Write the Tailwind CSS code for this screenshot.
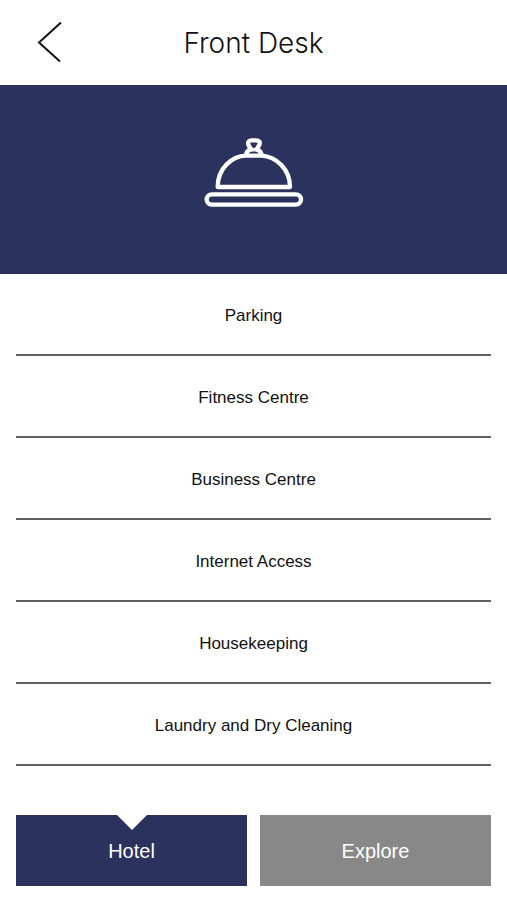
<!DOCTYPE html>
<html lang="en">
<head>
<meta charset="utf-8">
<meta name="viewport" content="width=device-width, initial-scale=1">
<title>Front Desk</title>
<script src="https://cdn.jsdelivr.net/npm/@tailwindcss/browser@4"></script>
</head>
<body class="flex min-h-screen flex-col bg-white font-['Liberation_Sans',Arial,sans-serif] text-[#111]">
  <header class="grid h-[85px] grid-cols-[1fr_auto_1fr] items-center px-8">
    <button type="button" aria-label="Back" class="justify-self-start px-1">
      <svg class="h-11 w-7" viewBox="0 0 28 44" fill="none" stroke="#111" stroke-width="2" aria-hidden="true"><path d="M25 1.500 3 21.500 24 40.500"/></svg>
    </button>
    <h1 class="font-[Inter,'Liberation_Sans',sans-serif] text-[28px] leading-8 font-light">Front Desk</h1>
  </header>

  <div class="flex h-[189px] justify-center bg-[#2b325d] pt-[52px]">
    <svg class="h-[71px] w-[100px]" viewBox="41 37 300 213" fill="none" stroke="#fff" stroke-width="13" stroke-linejoin="round" aria-hidden="true">
      <rect x="49" y="209" width="283" height="31" rx="15.500"/>
      <path d="M82 187C82 132 124 94 167 93H214C258 96 299 134 299 187Z"/>
      <path d="M167 91C168 80 175 76 182 74L175 62C170 50 177 47 184 47H197C206 47 212 52 206 62L199 74C206 76 212 80 214 91" stroke-width="13"/>
      <path d="M180 75H201" stroke-width="11"/>
    </svg>
  </div>

  <main class="px-4">
    <ul class="text-center text-[17px] leading-5">
      <li class="border-b-2 border-[#606060]"><a href="#parking" class="block pt-8 pb-7">Parking</a></li>
      <li class="border-b-2 border-[#606060]"><a href="#fitness" class="block pt-8 pb-7">Fitness Centre</a></li>
      <li class="border-b-2 border-[#606060]"><a href="#business" class="block pt-8 pb-7">Business Centre</a></li>
      <li class="border-b-2 border-[#606060]"><a href="#internet" class="block pt-8 pb-7">Internet Access</a></li>
      <li class="border-b-2 border-[#606060]"><a href="#housekeeping" class="block pt-8 pb-7">Housekeeping</a></li>
      <li class="border-b-2 border-[#606060]"><a href="#laundry" class="block pt-8 pb-7">Laundry and Dry Cleaning</a></li>
    </ul>
  </main>

  <nav class="mt-auto grid grid-cols-2 gap-[13px] px-4 pt-6 pb-[14px] text-center text-xl text-white">
    <a href="#hotel" aria-current="page" class="relative flex h-[71px] items-center justify-center bg-[#2b325d]">
      <svg class="absolute top-0 left-1/2 h-[15px] w-[30px] -translate-x-1/2" viewBox="0 0 30 15" fill="#fff" aria-hidden="true"><path d="M0 0H30L15 15Z"/></svg>
      Hotel
    </a>
    <a href="#explore" class="flex h-[71px] items-center justify-center bg-[#888]">Explore</a>
  </nav>
</body>
</html>
